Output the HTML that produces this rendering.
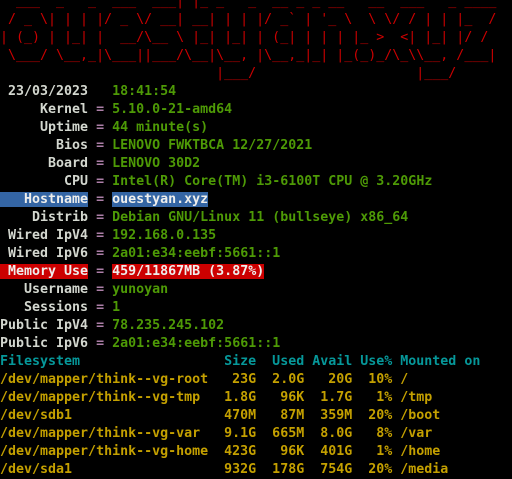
<!DOCTYPE html>
<html><head><meta charset="utf-8"><style>
html,body{margin:0;padding:0;background:#000;width:512px;height:464px;overflow:hidden}
pre{position:absolute;left:0;top:-7px;margin:0;font-family:"DejaVu Sans Mono","Liberation Mono",monospace;font-weight:bold;font-size:13.3px;line-height:18px;color:#d3d7cf;white-space:pre}
.r{color:#cc0000;font-weight:normal}
.g{color:#4e9a06}
.y{color:#c4a000}
.c{color:#06989a}
.e{color:#ad7fa8}
.hb{background:#3465a4;color:#eeeeec}
.mb{background:#cc0000;color:#eeeeec}
</style></head><body><pre><span class="r">  ___  _   _  ___  ___| |_ _   _  __ _ _ __   __  ___   _ ____
 / _ \| | | |/ _ \/ __| __| | | |/ _` | '_ \  \ \/ / | | |_  /
| (_) | |_| |  __/\__ \ |_| |_| | (_| | | | |_ >  <| |_| |/ / 
 \___/ \__,_|\___||___/\__|\__, |\__,_|_| |_(_)_/\_\\__, /___|
                           |___/                    |___/     </span>
 23/03/2023   <span class="g">18:41:54</span>
     Kernel <span class="e">=</span> <span class="g">5.10.0-21-amd64</span>
     Uptime <span class="e">=</span> <span class="g">44 minute(s)</span>
       Bios <span class="e">=</span> <span class="g">LENOVO FWKTBCA 12/27/2021</span>
      Board <span class="e">=</span> <span class="g">LENOVO 30D2</span>
        CPU <span class="e">=</span> <span class="g">Intel(R) Core(TM) i3-6100T CPU @ 3.20GHz</span>
<span class="hb">   Hostname</span> <span class="e">=</span> <span class="hb">ouestyan.xyz</span>
    Distrib <span class="e">=</span> <span class="g">Debian GNU/Linux 11 (bullseye) x86_64</span>
 Wired IpV4 <span class="e">=</span> <span class="g">192.168.0.135</span>
 Wired IpV6 <span class="e">=</span> <span class="g">2a01:e34:eebf:5661::1</span>
<span class="mb"> Memory Use</span> <span class="e">=</span> <span class="mb">459/11867MB (3.87%)</span>
   Username <span class="e">=</span> <span class="g">yunoyan</span>
   Sessions <span class="e">=</span> <span class="g">1</span>
Public IpV4 <span class="e">=</span> <span class="g">78.235.245.102</span>
Public IpV6 <span class="e">=</span> <span class="g">2a01:e34:eebf:5661::1</span>
<span class="c">Filesystem                  Size  Used Avail Use% Mounted on</span>
<span class="y">/dev/mapper/think--vg-root   23G  2.0G   20G  10% /
/dev/mapper/think--vg-tmp   1.8G   96K  1.7G   1% /tmp
/dev/sdb1                   470M   87M  359M  20% /boot
/dev/mapper/think--vg-var   9.1G  665M  8.0G   8% /var
/dev/mapper/think--vg-home  423G   96K  401G   1% /home
/dev/sda1                   932G  178G  754G  20% /media</span></pre></body></html>
